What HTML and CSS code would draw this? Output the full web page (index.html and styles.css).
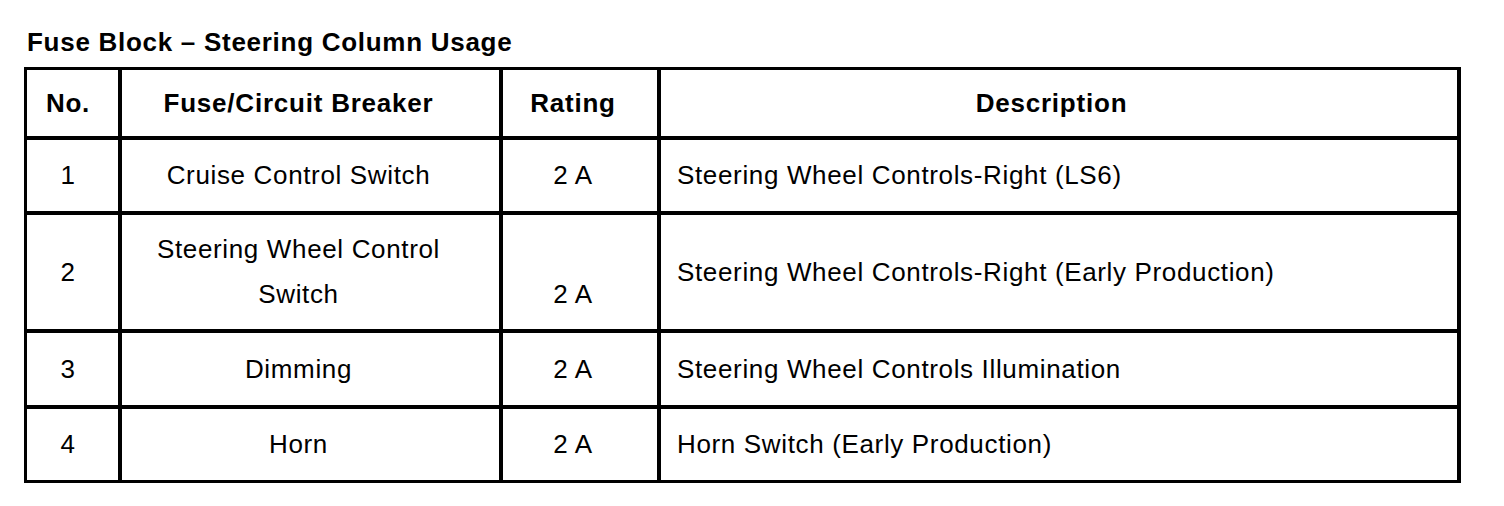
FILE: index.html
```html
<!DOCTYPE html>
<html>
<head>
<meta charset="utf-8">
<link rel="stylesheet" href="styles.css">
</head>
<body>
<div class="page">
  <h1 class="title">Fuse Block – Steering Column Usage</h1>
  <div class="table">
    <div class="cell c1 head">No.</div>
    <div class="cell c2 head">Fuse/Circuit Breaker</div>
    <div class="cell c3 head">Rating</div>
    <div class="cell c4 head center">Description</div>

    <div class="cell c1">1</div>
    <div class="cell c2">Cruise Control Switch</div>
    <div class="cell c3">2 A</div>
    <div class="cell c4">Steering Wheel Controls-Right (LS6)</div>

    <div class="cell c1">2</div>
    <div class="cell c2">Steering Wheel Control<br>Switch</div>
    <div class="cell c3">&nbsp;<br>2 A</div>
    <div class="cell c4">Steering Wheel Controls-Right (Early Production)</div>

    <div class="cell c1">3</div>
    <div class="cell c2">Dimming</div>
    <div class="cell c3">2 A</div>
    <div class="cell c4">Steering Wheel Controls Illumination</div>

    <div class="cell c1">4</div>
    <div class="cell c2">Horn</div>
    <div class="cell c3">2 A</div>
    <div class="cell c4">Horn Switch (Early Production)</div>
  </div>
</div>
</body>
</html>
```
FILE: styles.css
```css
html, body {
  margin: 0;
  padding: 0;
  background: #ffffff;
}
body {
  font-family: "Liberation Sans", Arial, sans-serif;
  color: #000000;
}
.page {
  padding: 27px 0 0 24px;
}
.title {
  margin: 0 0 9px 3px;
  font-size: 26px;
  line-height: 31px;
  font-weight: bold;
  letter-spacing: 0.72px;
}
.table {
  display: grid;
  width: 1437px;
  box-sizing: border-box;
  grid-template-columns: 91px 377px 154px 796px;
  grid-template-rows: 66px 71px 114px 72px 71px;
  gap: 4px;
  padding: 3px 4px 3px 3px;
  background: #000000;
}
.cell {
  background: #ffffff;
  display: flex;
  flex-direction: column;
  justify-content: center;
  align-items: center;
  text-align: center;
  font-size: 26px;
  line-height: 45px;
  letter-spacing: 0.65px;
}
.head {
  font-weight: bold;
  letter-spacing: 0.78px;
}
.c1 { padding-right: 9px; }
.c2 { padding-right: 24px; }
.c3 { padding-right: 14px; }
.c4 {
  align-items: flex-start;
  text-align: left;
  padding-left: 16px;
}
.c4.center {
  align-items: center;
  padding-left: 0;
  padding-right: 15px;
}
```
